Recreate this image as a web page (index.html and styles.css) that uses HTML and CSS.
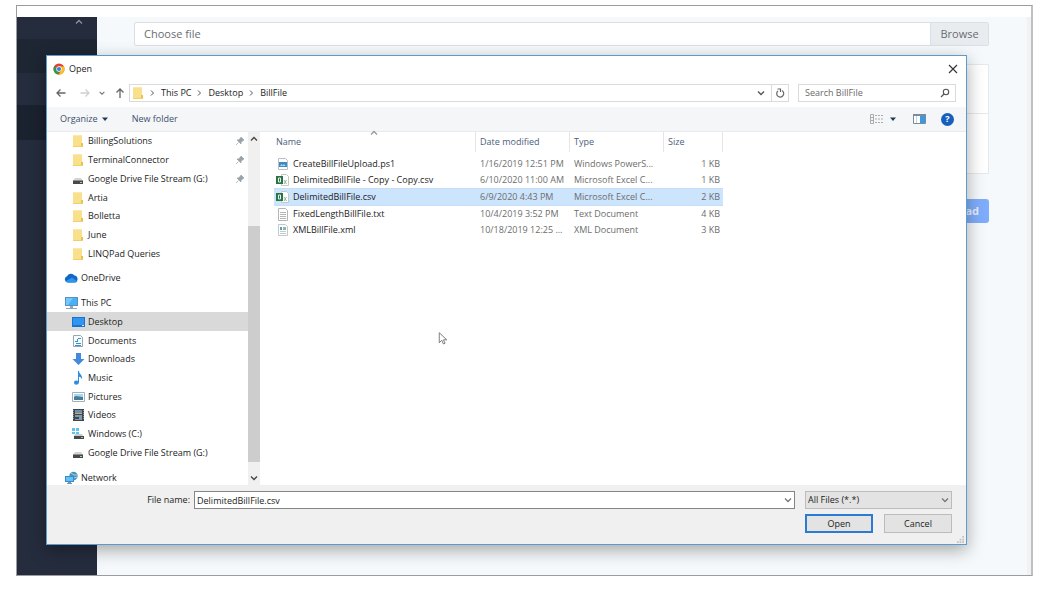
FILE: index.html
```html
<!DOCTYPE html>
<html lang="en">
<head>
<meta charset="utf-8">
<title>Open</title>
<link rel="stylesheet" href="styles.css">
</head>
<body>
<svg class="defs" aria-hidden="true">
  <symbol id="folder" viewBox="0 0 14 14"><path d="M2 1h9v8h1v4H2z" fill="#f9e08c"/><path d="M2 1h9v1H2z" fill="#fbe9ac"/><path d="M10 9h2v4h-2z" fill="#e8c250"/><path d="M2 12h10v1H2z" fill="#f1d068"/></symbol>
  <symbol id="drive" viewBox="0 0 14 14"><path d="M4 6h6l2 3H2z" fill="#d4d4d4"/><path d="M2 8h10v4H2z" fill="#454b4b"/><path d="M2 8h10v1H2z" fill="#8c9090"/><path d="M9 10h2v1H9z" fill="#a9cbb0"/></symbol>
  <symbol id="cloud" viewBox="0 0 14 14"><path d="M3.500 11.500A3.200 3.200 0 0 1 3 5.300 4.300 4.300 0 0 1 10.500 4.500 3.600 3.600 0 0 1 11 11.500z" fill="#1268c4"/><path d="M1.500 10.500 8 6.500l5.500 4-2 1h-8z" fill="#2c96ec"/></symbol>
  <symbol id="pc" viewBox="0 0 14 14"><path d="M1 1h13v9H1z" fill="#5a91bb"/><path d="M2 2h11v7H2z" fill="#48b0f6"/><path d="M2 2h7L4 9H2z" fill="#72c7ff"/><path d="M6 10h3v2H6zM2 12h11v1H2z" fill="#8da5b8"/></symbol>
  <symbol id="desktop" viewBox="0 0 14 14"><path d="M1 2h13v10H1z" fill="#1d73c9"/><path d="M2 3h11v7H2z" fill="#3196f2"/><path d="M11 10h2v1h-2z" fill="#d4edff"/></symbol>
  <symbol id="docs" viewBox="0 0 14 14"><path d="M2.500 1.500h7l2 2v9h-9z" fill="#f8fbfd" stroke="#9ba7ae"/><path d="M4 7h3v1H4zM7 4h3v1H7zM6 5h1v2H6zM5 9h5v1H5zM4 11h6v1H4z" fill="#3793ce"/></symbol>
  <symbol id="down" viewBox="0 0 14 14"><path d="M5 1h5v6h3.500l-6 6-6-6H5z" fill="#4489db"/></symbol>
  <symbol id="music" viewBox="0 0 14 14"><path d="M7 0h1c0 3 4 4 3 8.500-.6-2-1.500-2.500-3-2.800V11c0 3.500-5 3.500-5 .5C3 9.600 5 9 7 10z" fill="#2e8ee2"/></symbol>
  <symbol id="pics" viewBox="0 0 14 14"><path d="M1.500 2.500h12v9h-12z" fill="#fff" stroke="#a2b0b8"/><path d="M3 4h9v3H3z" fill="#a6d8f6"/><path d="M3 7c3-2 4 0 9 0v3H3z" fill="#4b7c94"/></symbol>
  <symbol id="videos" viewBox="0 0 14 14"><path d="M2 1h11v12H2z" fill="#40464f"/><path d="M4 2h7v4H4z" fill="#668eb7"/><path d="M4 7h7v5H4z" fill="#8298a3"/><path d="M4 5h7v1H4z" fill="#d7a857"/><path d="M4 9h4v2H4z" fill="#33495e"/><path d="M2.500 2v10M12.500 2v10" stroke="#8d9196" stroke-dasharray="1 1"/></symbol>
  <symbol id="windrive" viewBox="0 0 14 14"><path d="M1 1h3v3H1zM5 1h3v3H5zM1 5h3v2H1zM5 5h3v2H5z" fill="#5cc4f0"/><path d="M4 7h7l1 2H3z" fill="#c8cccc"/><path d="M3 9h10v3H3z" fill="#454b4b"/><path d="M10 10h2v1h-2z" fill="#8fc09a"/></symbol>
  <symbol id="network" viewBox="0 0 14 14"><circle cx="9.500" cy="5" r="4.200" fill="#4d91bd"/><path d="M7 2q3 3 6 2M6 6q4 2 7 0" stroke="#9fd2e8" fill="none"/><path d="M1 5h9v6H1z" fill="#368bc6"/><path d="M2 6h7v4H2z" fill="#63c1fb"/><path d="M4 11h3v1H4zM3 12h5v1H3z" fill="#7896ab"/></symbol>
  <symbol id="ps" viewBox="0 0 14 14"><path d="M2.500 1.500h7l2 2v9h-9z" fill="#fff" stroke="#b9bfc3"/><path d="M3 5h8v5H3z" fill="#3d8ac4"/><path d="m4 9 1.500-2 1 1.500L8 7l1.500 2z" fill="#a7dcfb"/></symbol>
  <symbol id="xls" viewBox="0 0 14 14"><path d="M5.500 1.500h5l2 2v9h-7z" fill="#fff" stroke="#c3c9c5"/><path d="m8 7 2.500 4m0-4L8 11" stroke="#8cb79b"/><path d="M0 3h7v8H0z" fill="#2a7349"/><path d="M2.500 5h2v4h-2z" fill="none" stroke="#e7f1ea"/></symbol>
  <symbol id="txt" viewBox="0 0 14 14"><path d="M2.500 1.500h7l2 2v10h-9z" fill="#fff" stroke="#b5b5b5"/><path d="M4 5.500h6M4 7.500h6M4 9.500h6M4 11.500h6" stroke="#b5b5b5"/></symbol>
  <symbol id="xml" viewBox="0 0 14 14"><path d="M2.500 1.500h7l2 2v9h-9z" fill="#fff" stroke="#c4c9cc"/><path d="M4 4h2v3H4z" fill="#5e9db6"/><path d="M7 4h3v3H7z" fill="#86b8a6"/><path d="M4 8.500h6M4 10.500h6" stroke="#c3cacd"/></symbol>
  <symbol id="pin" viewBox="0 0 10 10"><path d="m6 1 3 3-1 .5-2 2V8L2 4h1.500l2-2zM3.500 6.500 1 9" fill="#98a2aa" stroke="#98a2aa" stroke-width=".7"/></symbol>
  <symbol id="chev" viewBox="0 0 10 10"><path d="m2 3.500 3 3 3-3" fill="none" stroke="currentColor" stroke-width="1.300"/></symbol>
  <symbol id="chevup" viewBox="0 0 10 10"><path d="m2 6.500 3-3 3 3" fill="none" stroke="currentColor" stroke-width="1.300"/></symbol>
  <symbol id="chevright" viewBox="0 0 10 10"><path d="m3 2.500 2.500 2.500L3 7.500" fill="none" stroke="currentColor"/></symbol>
  <symbol id="caret" viewBox="0 0 10 10"><path d="M2 3.500h6L5 7z" fill="#1f3b5c"/></symbol>
</svg>
<div class="frame">
  <div class="site">
    <aside class="sidebar"><svg class="i10"><use href="#chevup"/></svg><div class="band"></div><div class="band"></div></aside>
    <main class="content">
      <label class="picker"><span>Choose file</span><button type="button">Browse</button></label>
      <section class="card"><div></div></section>
      <button class="upload" type="button">Upload</button>
    </main>
  </div>

  <div class="dialog" role="dialog" aria-label="Open">
    <header class="titlebar">
      <svg class="i12" viewBox="0 0 12 12"><circle cx="6" cy="6" r="5.500" fill="#e34133"/><path d="M1.200 3.300 6 6l-.3 5.500A5.500 5.500 0 0 1 1.200 3.300z" fill="#2c9c4c"/><path d="M6 3.500h4.900A5.500 5.500 0 0 1 5.700 11.500L8.200 7z" fill="#fbc116"/><circle cx="6" cy="6" r="2.700" fill="#fff"/><circle cx="6" cy="6" r="2.100" fill="#3b7ded"/></svg>
      <span class="title">Open</span>
      <button type="button" class="plain" aria-label="Close"><svg class="i10" viewBox="0 0 10 10"><path d="m1 1 8 8M9 1 1 9" stroke="#333" stroke-width="1.100"/></svg></button>
    </header>

    <div class="navbar">
      <div class="arrows">
        <button type="button" class="plain" aria-label="Back"><svg class="i10" viewBox="0 0 10 10"><path d="M9.500 5H1m3.500-3.500L1 5l3.500 3.500" fill="none" stroke="#666" stroke-width="1.300"/></svg></button>
        <button type="button" class="plain" aria-label="Forward"><svg class="i10" viewBox="0 0 10 10"><path d="M.5 5H9M5.500 1.500 9 5 5.500 8.500" fill="none" stroke="#d0d0d0" stroke-width="1.300"/></svg></button>
        <button type="button" class="plain recent" aria-label="Recent locations"><svg class="i8"><use href="#chev"/></svg></button>
        <button type="button" class="plain" aria-label="Up"><svg class="i10" viewBox="0 0 10 10"><path d="M5 10V1M1.500 4.500 5 1l3.500 3.500" fill="none" stroke="#666" stroke-width="1.300"/></svg></button>
      </div>
      <div class="address">
        <svg class="i14"><use href="#folder"/></svg>
        <svg class="i10"><use href="#chevright"/></svg><a href="#pc">This PC</a>
        <svg class="i10"><use href="#chevright"/></svg><a href="#desktop">Desktop</a>
        <svg class="i10"><use href="#chevright"/></svg><a href="#billfile">BillFile</a>
        <button type="button" class="plain history" aria-label="Previous locations"><svg class="i10"><use href="#chev"/></svg></button>
        <button type="button" class="plain refresh" aria-label="Refresh"><svg class="i10" viewBox="0 0 10 10"><path d="M7 2.600A3.500 3.500 0 1 1 3 2.900M2.500 1H5.500V4" fill="none" stroke="#666" stroke-width="1.200"/></svg></button>
      </div>
      <div class="search">
        <input type="text" placeholder="Search BillFile" aria-label="Search BillFile">
        <svg class="i10" viewBox="0 0 10 10"><circle cx="6" cy="4" r="2.700" fill="none" stroke="#555" stroke-width="1.100"/><path d="M4 6 1 9" stroke="#555" stroke-width="1.300"/></svg>
      </div>
    </div>

    <div class="toolbar">
      <button type="button" class="plain">Organize <svg class="i10"><use href="#caret"/></svg></button>
      <button type="button" class="plain">New folder</button>
      <div class="views">
        <button type="button" class="plain" aria-label="Change view"><svg class="i14" viewBox="0 0 14 14"><path d="M1.500 2.500h3v9h-3zM1 5.500h4M1 8.500h4" fill="none" stroke="#a9adb2"/><path d="M6 3.500h8M6 7h8M6 10.500h8" stroke="#a9adb2" stroke-dasharray="2 1"/></svg></button>
        <button type="button" class="plain" aria-label="More views"><svg class="i10"><use href="#caret"/></svg></button>
        <button type="button" class="plain pane" aria-label="Preview pane"><svg class="i14" viewBox="0 0 14 14"><path d="M1.500 2.500h12v9h-12z" fill="#fff" stroke="#7c8b99"/><path d="M1 2h13v2H1z" fill="#7c8b99"/><path d="M8 4h5v7H8z" fill="#3b98e6"/><path d="M4.500 4v7" stroke="#c7d3dd"/></svg></button>
        <button type="button" class="plain help" aria-label="Help">?</button>
      </div>
    </div>

    <div class="body">
      <nav class="tree" aria-label="Folders">
        <ul>
          <li><svg class="i14"><use href="#folder"/></svg><span>BillingSolutions</span><svg class="i10"><use href="#pin"/></svg></li>
          <li><svg class="i14"><use href="#folder"/></svg><span>TerminalConnector</span><svg class="i10"><use href="#pin"/></svg></li>
          <li><svg class="i14"><use href="#drive"/></svg><span>Google Drive File Stream (G:)</span><svg class="i10"><use href="#pin"/></svg></li>
          <li><svg class="i14"><use href="#folder"/></svg><span>Artia</span></li>
          <li><svg class="i14"><use href="#folder"/></svg><span>Bolletta</span></li>
          <li><svg class="i14"><use href="#folder"/></svg><span>June</span></li>
          <li><svg class="i14"><use href="#folder"/></svg><span>LINQPad Queries</span></li>
          <li class="root"><svg class="i14"><use href="#cloud"/></svg><span>OneDrive</span></li>
          <li class="root"><svg class="i14"><use href="#pc"/></svg><span>This PC</span></li>
          <li class="current"><svg class="i14"><use href="#desktop"/></svg><span>Desktop</span></li>
          <li><svg class="i14"><use href="#docs"/></svg><span>Documents</span></li>
          <li><svg class="i14"><use href="#down"/></svg><span>Downloads</span></li>
          <li><svg class="i14"><use href="#music"/></svg><span>Music</span></li>
          <li><svg class="i14"><use href="#pics"/></svg><span>Pictures</span></li>
          <li><svg class="i14"><use href="#videos"/></svg><span>Videos</span></li>
          <li><svg class="i14"><use href="#windrive"/></svg><span>Windows (C:)</span></li>
          <li><svg class="i14"><use href="#drive"/></svg><span>Google Drive File Stream (G:)</span></li>
          <li class="root"><svg class="i14"><use href="#network"/></svg><span>Network</span></li>
        </ul>
      </nav>
      <div class="scroll"><svg class="i10"><use href="#chevup"/></svg><div class="gap"></div><div class="thumb"></div><svg class="i10"><use href="#chev"/></svg></div>
      <div class="files">
        <svg class="sort i10"><use href="#chevup"/></svg>
        <table>
          <colgroup><col class="c-name"><col class="c-date"><col class="c-type"><col class="c-size"></colgroup>
          <thead><tr><th>Name</th><th>Date modified</th><th>Type</th><th>Size</th></tr></thead>
          <tbody>
            <tr><td><span class="file"><svg class="i14"><use href="#ps"/></svg>CreateBillFileUpload.ps1</span></td><td>1/16/2019 12:51 PM</td><td>Windows PowerS...</td><td>1 KB</td></tr>
            <tr><td><span class="file"><svg class="i14"><use href="#xls"/></svg>DelimitedBillFile - Copy - Copy.csv</span></td><td>6/10/2020 11:00 AM</td><td>Microsoft Excel C...</td><td>1 KB</td></tr>
            <tr class="selected"><td><span class="file"><svg class="i14"><use href="#xls"/></svg>DelimitedBillFile.csv</span></td><td>6/9/2020 4:43 PM</td><td>Microsoft Excel C...</td><td>2 KB</td></tr>
            <tr><td><span class="file"><svg class="i14"><use href="#txt"/></svg>FixedLengthBillFile.txt</span></td><td>10/4/2019 3:52 PM</td><td>Text Document</td><td>4 KB</td></tr>
            <tr><td><span class="file"><svg class="i14"><use href="#xml"/></svg>XMLBillFile.xml</span></td><td>10/18/2019 12:25 ...</td><td>XML Document</td><td>3 KB</td></tr>
          </tbody>
        </table>
      </div>
    </div>

    <footer class="footer">
      <label for="fname">File name:</label>
      <div class="combo"><input id="fname" type="text" value="DelimitedBillFile.csv"><svg class="i10"><use href="#chev"/></svg></div>
      <div class="combo"><select aria-label="File type"><option>All Files (*.*)</option></select><svg class="i10"><use href="#chev"/></svg></div>
      <div class="actions"><button type="button" class="default">Open</button><button type="button">Cancel</button></div>
      <svg class="grip" viewBox="0 0 8 8"><path d="M6 0h2v2H6zM3 3h2v2H3zM6 3h2v2H6zM0 6h2v2H0zM3 6h2v2H3zM6 6h2v2H6z" fill="#c2c2c2"/></svg>
    </footer>
  </div>
  <svg class="cursor" viewBox="0 0 12 18"><path d="M1.500 1.500v12l3-3 2 4.500 2-1-2-4h4z" fill="#fff" stroke="#666"/></svg>
</div>
</body>
</html>
```
FILE: styles.css
```css
* { box-sizing: border-box; }
body {
  margin: 0;
  padding: 5px 21px 16px 16px;
  min-height: 100vh;
  display: flex;
  background: #fff;
  color: #1c1c1c;
  font: 9px/12px "Open Sans", "Noto Sans", sans-serif;
}
button, input, select { font: inherit; color: inherit; margin: 0; }
svg { display: block; flex: none; }
.defs { position: absolute; width: 0; height: 0; }
.i8 { width: 8px; height: 8px; }
.i10 { width: 10px; height: 10px; }
.i12 { width: 12px; height: 12px; }
.i14 { width: 14px; height: 14px; }
.plain { border: 0; padding: 0; background: none; display: flex; align-items: center; }

.frame {
  position: relative;
  flex: 1;
  display: flex;
  padding-top: 11px;
  border: 1px solid #9c9c9c;
  border-right: 2px solid #c0c0c0;
}
.site { flex: 1; display: flex; background: #f6f9fb; border-right: 4px solid #f0f2f4; }
.sidebar { width: 80px; background: #252c3d; color: #8d939e; display: flex; flex-direction: column; }
.sidebar .i10 { margin-left: 57px; }
.band { height: 34px; margin-top: 12px; background: #1e2633; }
.band + .band { height: 35px; margin-top: 32px; background: #1b222f; }
.content { flex: 1; padding: 5px 38px 0 37px; display: flex; flex-direction: column; }
.picker {
  display: flex;
  align-items: center;
  height: 24px;
  padding-left: 9px;
  background: #fff;
  border: 1px solid #dcdfe3;
  border-radius: 2px;
  color: #686d72;
  font-size: 11px;
}
.picker button { margin-left: auto; align-self: stretch; width: 58px; border: 0; border-left: 1px solid #dcdfe3; background: #e9ecef; padding: 0; }
.card { margin-top: 18px; height: 110px; background: #fff; border: 1px solid #e6e8eb; }
.card div { height: 49px; border-bottom: 1px solid #e6e8eb; }
.upload { align-self: flex-end; margin-top: 25px; height: 24px; padding: 0 10px; border: 0; border-radius: 3px; background: #7fadfb; color: #e4eefe; font-size: 11px; font-weight: 700; }

.dialog {
  position: absolute;
  inset: 49px 64px 30px 29px;
  display: flex;
  flex-direction: column;
  background: #fff;
  border: 1px solid #5b9bd0;
  box-shadow: 0 5px 16px rgba(0, 0, 0, .34);
}
.titlebar { height: 26px; padding: 0 8px 0 6px; display: flex; align-items: center; gap: 4px; }
.title { flex: 1; }
.navbar { display: flex; align-items: center; gap: 9px; padding: 2px 10px 5px 9px; height: 25px; }
.arrows { display: flex; gap: 14px; width: 64px; align-items: center; color: #777; }
.recent { margin: 0 -5px 0 -6px; }
.address, .search { height: 18px; border: 1px solid #dadada; display: flex; align-items: center; }
.address { flex: 1; gap: 3px; padding-left: 1px; color: #555; }
.address a { color: #1c1c1c; text-decoration: none; }
.address a + svg { margin-left: 1px; }
.history { margin-left: auto; }
.refresh { align-self: stretch; margin-left: 2px; padding: 0 3px; border-left: 1px solid #dadada; }
.search { width: 158px; padding: 0 5px 0 6px; }
.search input { flex: 1; min-width: 0; border: 0; padding: 0; background: none; outline: 0; }
.search input::placeholder { color: #6a6a6a; opacity: 1; }
.toolbar { height: 25px; padding: 0 12px 0 13px; display: flex; align-items: center; gap: 22px; background: #f5f6f7; border-bottom: 1px solid #e8eaec; color: #3c5070; }
.toolbar .plain { gap: 2px; }
.views { margin-left: auto; display: flex; align-items: center; gap: 5px; }
.pane { margin: 0 10px 0 9px; }
.toolbar .help { width: 13px; height: 13px; border-radius: 50%; justify-content: center; background: #175fbd; color: #fff; font-weight: 700; }

.body { flex: 1; min-height: 0; display: flex; }
.tree { width: 201px; overflow: hidden; }
.tree ul { list-style: none; margin: 0; padding: 0; height: calc(100% + 2px); display: flex; flex-direction: column; }
.tree li { flex: 1; display: flex; align-items: center; gap: 3px; padding: 0 3px 0 24px; white-space: nowrap; }
.tree li span { flex: 1; }
.tree .root { padding-left: 17px; margin-top: 6px; }
.tree .current { background: #d9d9d9; }
.scroll { width: 12px; display: flex; flex-direction: column; align-items: center; padding: 2px 0; background: #f0f0f0; color: #444; }
.gap { flex: 82; }
.thumb { flex: 236; width: 100%; margin-bottom: 11px; background: #cdcdcd; }
.files { flex: 1; padding: 0 0 0 14px; display: grid; align-content: start; }
.files > * { grid-area: 1 / 1; }
.sort { margin: -4px 0 0 95px; color: #999; }
table { width: 449px; table-layout: fixed; border-collapse: separate; border-spacing: 0; }
.c-name { width: 202px; }
.c-date, .c-type { width: 94px; }
th, td { padding: 0; text-align: left; font-weight: 400; white-space: nowrap; }
th { height: 20px; color: #4c607a; border-right: 1px solid #e5e5e5; }
th:first-child { padding-left: 2px; }
th + th, td + td { padding-left: 4px; }
thead::after { content: ""; display: block; height: 4px; }
td { height: 16px; color: #6d6d6d; }
td:first-child { color: #1c1c1c; }
td:last-child { text-align: right; padding-right: 3px; }
.file { display: flex; align-items: center; gap: 3px; padding-left: 2px; }
.selected td { height: 18px; background: #cce4fc; border: solid #c2def9; border-width: 1px 0; }

.footer {
  position: relative;
  display: grid;
  grid-template-columns: 143px 1fr 147px;
  gap: 5px 0;
  padding: 6px 14px 11px 0;
  background: #f0f0f0;
}
.footer label { text-align: right; line-height: 18px; }
.combo { display: grid; align-items: center; margin-left: 4px; }
.combo + .combo { margin-left: 0; }
.combo > * { grid-area: 1 / 1; }
.combo svg { justify-self: end; margin-right: 2px; color: #777; pointer-events: none; }
.combo input, .combo select { width: 100%; height: 18px; padding: 0 2px; border: 1px solid #858585; border-radius: 0; background: #fff; outline: 0; appearance: none; }
.combo select { background: #e3e3e3; border-color: #bcbcbc; }
.footer .combo:nth-child(2) { margin-right: 10px; }
.actions { grid-column: 3; display: grid; grid-template-columns: 1fr 1fr; gap: 11px; }
.actions button { height: 19px; padding: 0; border: 1px solid #bcbcbc; background: #e3e3e3; }
.actions .default { border: 2px solid #2b7bd3; }
.grip { position: absolute; right: 2px; bottom: 1px; width: 7px; height: 7px; }
.cursor { position: absolute; left: 421px; top: 325px; width: 10px; height: 16px; }
```
